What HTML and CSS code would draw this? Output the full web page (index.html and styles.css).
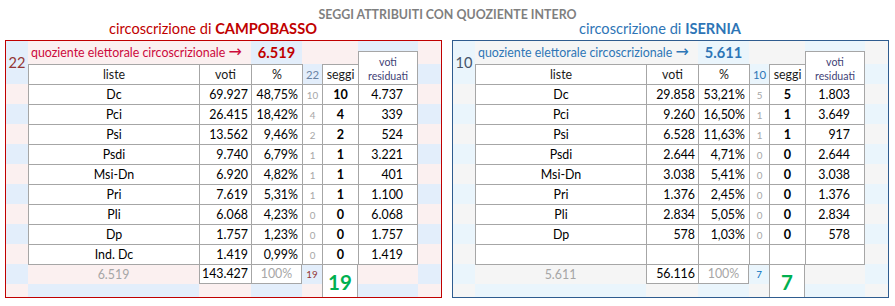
FILE: index.html
```html
<!DOCTYPE html>
<html lang="it">
<head>
<meta charset="utf-8">
<title>Seggi attribuiti con quoziente intero</title>
<link rel="stylesheet" href="styles.css">
</head>
<body>
<div class="title">SEGGI ATTRIBUITI CON QUOZIENTE INTERO</div>
<div class="panels">

  <section class="panel red">
    <div class="caption">circoscrizione di <b>CAMPOBASSO</b></div>
    <div class="grid">
      <div class="cell ca bl span2r">22</div>
      <div class="cell quot pk span2c">quoziente elettorale circoscrizionale <span class="arrow">&rarr;</span></div>
      <div class="cell qval bl">6.519</div>
      <div class="cell pk"></div>
      <div class="cell pk"></div>
      <div class="cell resh bl span2r"><div class="resbox">voti<br>residuati</div></div>
      <div class="cell pk"></div>

      <div class="cell hd bt blft">liste</div>
      <div class="cell hd bt blft">voti</div>
      <div class="cell hd bt blft">%</div>
      <div class="cell hsum bl blft">22</div>
      <div class="cell hd bt blft">seggi</div>
      <div class="cell bl"></div>

      <div class="cell pk"></div><div class="cell nm">Dc</div><div class="cell vt">69.927</div><div class="cell pc">48,75%</div><div class="cell sm">10</div><div class="cell sg">10</div><div class="cell rs">4.737</div><div class="cell pk"></div>
      <div class="cell bl"></div><div class="cell nm">Pci</div><div class="cell vt">26.415</div><div class="cell pc">18,42%</div><div class="cell sm">4</div><div class="cell sg">4</div><div class="cell rs">339</div><div class="cell bl"></div>
      <div class="cell pk"></div><div class="cell nm">Psi</div><div class="cell vt">13.562</div><div class="cell pc">9,46%</div><div class="cell sm">2</div><div class="cell sg">2</div><div class="cell rs">524</div><div class="cell pk"></div>
      <div class="cell bl"></div><div class="cell nm">Psdi</div><div class="cell vt">9.740</div><div class="cell pc">6,79%</div><div class="cell sm">1</div><div class="cell sg">1</div><div class="cell rs">3.221</div><div class="cell bl"></div>
      <div class="cell pk"></div><div class="cell nm">Msi-Dn</div><div class="cell vt">6.920</div><div class="cell pc">4,82%</div><div class="cell sm">1</div><div class="cell sg">1</div><div class="cell rs">401</div><div class="cell pk"></div>
      <div class="cell bl"></div><div class="cell nm">Pri</div><div class="cell vt">7.619</div><div class="cell pc">5,31%</div><div class="cell sm">1</div><div class="cell sg">1</div><div class="cell rs">1.100</div><div class="cell bl"></div>
      <div class="cell pk"></div><div class="cell nm">Pli</div><div class="cell vt">6.068</div><div class="cell pc">4,23%</div><div class="cell sm">0</div><div class="cell sg">0</div><div class="cell rs">6.068</div><div class="cell pk"></div>
      <div class="cell bl"></div><div class="cell nm">Dp</div><div class="cell vt">1.757</div><div class="cell pc">1,23%</div><div class="cell sm">0</div><div class="cell sg">0</div><div class="cell rs">1.757</div><div class="cell bl"></div>
      <div class="cell pk"></div><div class="cell nm">Ind. Dc</div><div class="cell vt">1.419</div><div class="cell pc">0,99%</div><div class="cell sm">0</div><div class="cell sg">0</div><div class="cell rs">1.419</div><div class="cell pk"></div>

      <div class="cell bl"></div>
      <div class="cell tq pk bt">6.519</div>
      <div class="cell tv bt blft bb">143.427</div>
      <div class="cell tp bt blft bb br">100%</div>
      <div class="cell ts bl bt">19</div>
      <div class="cell tg span2r bt blft br">19</div>
      <div class="cell pk bt"></div>
      <div class="cell bl"></div>

      <div class="cell pk"></div><div class="cell bl"></div><div class="cell pk"></div><div class="cell bl"></div><div class="cell pk"></div><div class="cell bl"></div><div class="cell pk"></div>
    </div>
  </section>

  <section class="panel blue">
    <div class="caption">circoscrizione di <b>ISERNIA</b></div>
    <div class="grid">
      <div class="cell ca bl span2r">10</div>
      <div class="cell quot pk span2c">quoziente elettorale circoscrizionale <span class="arrow">&rarr;</span></div>
      <div class="cell qval bl">5.611</div>
      <div class="cell pk"></div>
      <div class="cell pk"></div>
      <div class="cell resh bl span2r"><div class="resbox">voti<br>residuati</div></div>
      <div class="cell pk"></div>

      <div class="cell hd bt blft">liste</div>
      <div class="cell hd bt blft">voti</div>
      <div class="cell hd bt blft">%</div>
      <div class="cell hsum bl blft">10</div>
      <div class="cell hd bt blft">seggi</div>
      <div class="cell bl"></div>

      <div class="cell pk"></div><div class="cell nm">Dc</div><div class="cell vt">29.858</div><div class="cell pc">53,21%</div><div class="cell sm">5</div><div class="cell sg">5</div><div class="cell rs">1.803</div><div class="cell pk"></div>
      <div class="cell bl"></div><div class="cell nm">Pci</div><div class="cell vt">9.260</div><div class="cell pc">16,50%</div><div class="cell sm">1</div><div class="cell sg">1</div><div class="cell rs">3.649</div><div class="cell bl"></div>
      <div class="cell pk"></div><div class="cell nm">Psi</div><div class="cell vt">6.528</div><div class="cell pc">11,63%</div><div class="cell sm">1</div><div class="cell sg">1</div><div class="cell rs">917</div><div class="cell pk"></div>
      <div class="cell bl"></div><div class="cell nm">Psdi</div><div class="cell vt">2.644</div><div class="cell pc">4,71%</div><div class="cell sm">0</div><div class="cell sg">0</div><div class="cell rs">2.644</div><div class="cell bl"></div>
      <div class="cell pk"></div><div class="cell nm">Msi-Dn</div><div class="cell vt">3.038</div><div class="cell pc">5,41%</div><div class="cell sm">0</div><div class="cell sg">0</div><div class="cell rs">3.038</div><div class="cell pk"></div>
      <div class="cell bl"></div><div class="cell nm">Pri</div><div class="cell vt">1.376</div><div class="cell pc">2,45%</div><div class="cell sm">0</div><div class="cell sg">0</div><div class="cell rs">1.376</div><div class="cell bl"></div>
      <div class="cell pk"></div><div class="cell nm">Pli</div><div class="cell vt">2.834</div><div class="cell pc">5,05%</div><div class="cell sm">0</div><div class="cell sg">0</div><div class="cell rs">2.834</div><div class="cell pk"></div>
      <div class="cell bl"></div><div class="cell nm">Dp</div><div class="cell vt">578</div><div class="cell pc">1,03%</div><div class="cell sm">0</div><div class="cell sg">0</div><div class="cell rs">578</div><div class="cell bl"></div>
      <div class="cell pk"></div><div class="cell nm"></div><div class="cell vt"></div><div class="cell pc"></div><div class="cell sm"></div><div class="cell sg"></div><div class="cell rs"></div><div class="cell pk"></div>

      <div class="cell bl"></div>
      <div class="cell tq pk bt">5.611</div>
      <div class="cell tv bt blft bb">56.116</div>
      <div class="cell tp bt blft bb br">100%</div>
      <div class="cell ts bl bt">7</div>
      <div class="cell tg span2r bt blft br">7</div>
      <div class="cell pk bt"></div>
      <div class="cell bl"></div>

      <div class="cell pk"></div><div class="cell bl"></div><div class="cell pk"></div><div class="cell bl"></div><div class="cell pk"></div><div class="cell bl"></div><div class="cell pk"></div>
    </div>
  </section>

</div>
</body>
</html>
```

FILE: styles.css
```css
* { box-sizing: border-box; }

html, body {
  margin: 0;
  padding: 0;
  background: #ffffff;
}

body {
  width: 895px;
  height: 306px;
  font-family: Lato, "Open Sans", "Liberation Sans", sans-serif;
  color: #000;
  overflow: hidden;
}

.title {
  height: 22px;
  padding-top: 7px;
  line-height: 16px;
  text-align: center;
  font-weight: 700;
  font-size: 12.4px;
  color: #7f7f7f;
}

.panels {
  display: flex;
  gap: 10px;
  padding-left: 5px;
}

.panel {
  width: 437px;
}

.caption {
  width: 416px;
  height: 18px;
  line-height: 14px;
  text-align: center;
  font-size: 14.6px;
}

.caption b { font-weight: 700; }

.grid {
  display: grid;
  grid-template-columns: 22px 171px 52px 51px 20px 36px 60px 23px;
  grid-template-rows: 23px repeat(11, 20px) 13px;
  border: 1px solid;
  height: 258px;
}

.cell {
  min-width: 0;
  font-size: 12.4px;
  line-height: 20px;
  white-space: nowrap;
  overflow: hidden;
  background: #fff;
}

.span2r { grid-row: span 2; }
.span2c { grid-column: span 2; }

/* borders */
.bt { border-top: 1px solid #a6a6a6; }
.blft { border-left: 1px solid #a6a6a6; }
.br { border-right: 1px solid #a6a6a6; }
.bb { border-bottom: 1px solid #a6a6a6; }

/* stripes */
.red .bl { background: #e3eefb; }
.red .pk { background: #fbf0f0; }
.blue .bl { background: #eaf5fc; }
.blue .pk { background: #f5f5f5; }

/* panel colours */
.red .grid { border-color: #c00000; }
.blue .grid { border-color: #2f5c8f; }
.red .caption { color: #c00000; }
.blue .caption { color: #2e75b6; }

.ca {
  display: flex;
  align-items: center;
  justify-content: center;
  font-size: 14.6px;
  padding-top: 1px;
}
.red .ca { color: #943634; }
.blue .ca { color: #44546a; }

.quot {
  font-size: 12.4px;
  line-height: 23px;
  padding-left: 3px;
}
.red .quot { color: #cc0a3c; }
.blue .quot { color: #2e75b6; }

.arrow {
  font-family: "DejaVu Sans", sans-serif;
  font-size: 16px;
  line-height: 20px;
}

.qval {
  text-align: center;
  font-weight: 700;
  font-size: 14.6px;
  line-height: 23px;
}
.red .qval { color: #c00000; }
.blue .qval { color: #2e75b6; }

.resh { padding-top: 10px; }
.resbox {
  height: 33px;
  background: #fff;
  border: 1px solid #a6a6a6;
  border-bottom: none;
  text-align: center;
  font-size: 10.6px;
  line-height: 14px;
  padding-top: 3px;
  color: #3f3f76;
}

.hd {
  text-align: center;
  color: #1a1a1a;
}

.hsum {
  text-align: center;
  font-size: 11.4px;
  line-height: 21px;
}
.red .hsum { color: #6b84a3; }
.blue .hsum { color: #2e75b6; }

.nm { text-align: center; border-top: 1px solid #a6a6a6; border-left: 1px solid #a6a6a6; }
.vt { text-align: right; padding-right: 3px; border-top: 1px solid #a6a6a6; border-left: 1px solid #a6a6a6; }
.pc { text-align: right; padding-right: 4px; border-top: 1px solid #a6a6a6; border-left: 1px solid #a6a6a6; }
.sm {
  text-align: center;
  font-size: 9.8px;
  color: #a6a6a6;
  border-top: 1px solid #a6a6a6;
  border-left: 1px solid #a6a6a6;
}
.sg {
  text-align: center;
  font-weight: 700;
  font-size: 12.6px;
  border-top: 1px solid #a6a6a6;
  border-left: 1px solid #a6a6a6;
}
.rs {
  text-align: right;
  padding-right: 14px;
  border-top: 1px solid #a6a6a6;
  border-left: 1px solid #a6a6a6;
  border-right: 1px solid #a6a6a6;
}

.tq { text-align: center; color: #a6a6a6; }
.tv { text-align: right; padding-right: 3px; line-height: 18px; }
.tp { text-align: center; color: #a6a6a6; line-height: 18px; }
.ts {
  text-align: center;
  font-size: 9.8px;
  line-height: 18px;
}
.red .ts { color: #943634; }
.blue .ts { color: #0070c0; }

.tg {
  text-align: center;
  font-weight: 700;
  font-size: 20.5px;
  line-height: 34px;
  color: #00b050;
}
```
